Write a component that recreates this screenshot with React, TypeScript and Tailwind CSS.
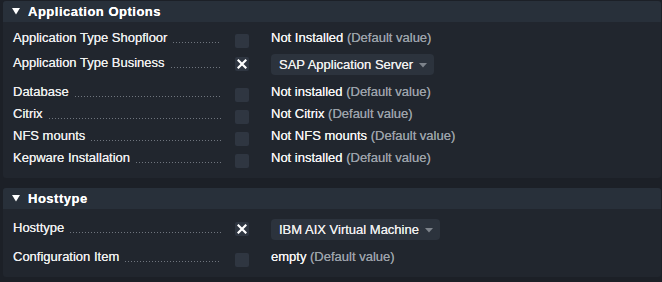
import React from "react";

type Row =
  | { label: string; kind: "value"; value: string; checked?: false }
  | { label: string; kind: "select"; value: string; checked: true };

const Check = ({ checked }: { checked?: boolean }) => (
  <div className="w-[14px] h-[14px] rounded-[2px] bg-[#2f3641] flex items-center justify-center shrink-0">
    {checked ? (
      <svg width="10" height="10" viewBox="0 0 10 10">
        <path d="M1.5 1.5 L8.5 8.5 M8.5 1.5 L1.5 8.5" stroke="#ffffff" strokeWidth="2.2" strokeLinecap="square" />
      </svg>
    ) : null}
  </div>
);

const Leader = () => (
  <div className="flex-1 h-px mt-[12px] ml-[6px] bg-[linear-gradient(to_right,#6f757e_1px,transparent_1px)] bg-[length:3px_1px] bg-repeat-x" />
);

const RowView = ({ row }: { row: Row }) => {
  if (row.kind === "select") {
    return (
      <div className="flex items-start h-[32px]">
        <div className="flex w-[208px] h-4 mt-[2px] pt-[1px]">
          <span className="leading-4 whitespace-nowrap">{row.label}</span>
          <Leader />
        </div>
        <div className="ml-[14px] mt-[5px]">
          <Check checked />
        </div>
        <div className="ml-[22px] mt-[2px] h-[21px] rounded-[4px] bg-[#2c333d] flex items-center pl-[8px] pr-[7px]">
          <span className="leading-4 whitespace-nowrap">{row.value}</span>
          <svg className="ml-[6px] mt-[2px]" width="8" height="5" viewBox="0 0 8 5">
            <path d="M0 0 L8 0 L4 4.5 Z" fill="#7d838b" />
          </svg>
        </div>
      </div>
    );
  }
  return (
    <div className="flex items-start h-[22px]">
      <div className="flex w-[208px] h-4">
        <span className="leading-4 whitespace-nowrap">{row.label}</span>
        <Leader />
      </div>
      <div className="ml-[14px] mt-[4px]">
        <Check />
      </div>
      <div className="ml-[22px] leading-4 whitespace-nowrap">
        <span className="text-[#f4f4f4]">{row.value}</span>{" "}
        <span className="text-[#9ba1a9]">(Default value)</span>
      </div>
    </div>
  );
};

const Panel = ({ title, rows }: { title: string; rows: Row[] }) => (
  <div className="ml-[3px] mr-[1px] rounded-[3px] overflow-hidden bg-[#21262e]">
    <div className="h-[21px] bg-[#28303a] flex items-center pl-[9px]">
      <svg width="8" height="7" viewBox="0 0 8 7">
        <path d="M0 0 L8 0 L4 6.5 Z" fill="#ffffff" />
      </svg>
      <span className="ml-[8px] text-[13px] font-bold text-white leading-4 tracking-[0.5px]">{title}</span>
    </div>
    <div className="pt-[8px] pb-[6px] pl-[10px]">
      {rows.map((r, i) => (
        <RowView key={i} row={r} />
      ))}
    </div>
  </div>
);

export default function App() {
  const p1: Row[] = [
    { label: "Application Type Shopfloor", kind: "value", value: "Not Installed" },
    { label: "Application Type Business", kind: "select", value: "SAP Application Server", checked: true },
    { label: "Database", kind: "value", value: "Not installed" },
    { label: "Citrix", kind: "value", value: "Not Citrix" },
    { label: "NFS mounts", kind: "value", value: "Not NFS mounts" },
    { label: "Kepware Installation", kind: "value", value: "Not installed" },
  ];
  const p2: Row[] = [
    { label: "Hosttype", kind: "select", value: "IBM AIX Virtual Machine", checked: true },
    { label: "Configuration Item", kind: "value", value: "empty" },
  ];
  return (
    <div
      className="w-[662px] h-[282px] bg-[#1c2027] pt-[1px] text-[13px] text-[#eeeeee] overflow-hidden [text-shadow:0_0_0.4px_currentColor]"
      style={{ fontFamily: '"Liberation Sans", Arial, sans-serif' }}
    >
      <Panel title="Application Options" rows={p1} />
      <div className="h-[10px]" />
      <Panel title="Hosttype" rows={p2} />
    </div>
  );
}
